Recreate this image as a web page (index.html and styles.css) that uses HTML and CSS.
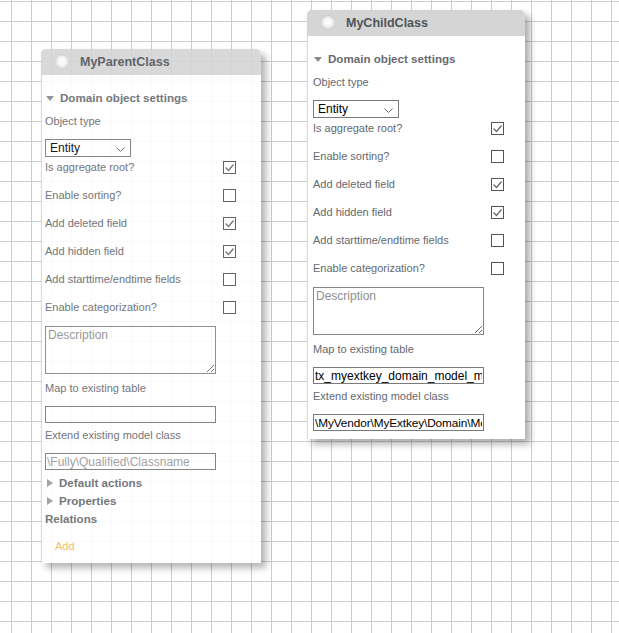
FILE: index.html
```html
<!DOCTYPE html>
<html>
<head>
<meta charset="utf-8">
<link rel="stylesheet" href="styles.css">
</head>
<body>
<div class="canvas">

  <div class="panel panel-parent">
    <div class="panel-head"><span class="knob"></span><span class="title">MyParentClass</span></div>
    <div class="panel-body">
      <div class="section"><span class="tri-down"></span>Domain object settings</div>
      <div class="label lbl-first">Object type</div>
      <div class="select">Entity<svg class="chev" width="9" height="5" viewBox="0 0 9 5"><path d="M0.5 0.5 L4.5 4.5 L8.5 0.5" fill="none" stroke="#666" stroke-width="1"/></svg></div>
      <div class="rows">
        <div class="row"><span>Is aggregate root?</span><span class="cb"><svg width="11" height="11" viewBox="0 0 11 11"><path d="M1.5 5.5 L4.5 8.5 L9.5 2.5" fill="none" stroke="#666" stroke-width="1.2"/></svg></span></div>
        <div class="row"><span>Enable sorting?</span><span class="cb"></span></div>
        <div class="row"><span>Add deleted field</span><span class="cb"><svg width="11" height="11" viewBox="0 0 11 11"><path d="M1.5 5.5 L4.5 8.5 L9.5 2.5" fill="none" stroke="#666" stroke-width="1.2"/></svg></span></div>
        <div class="row"><span>Add hidden field</span><span class="cb"><svg width="11" height="11" viewBox="0 0 11 11"><path d="M1.5 5.5 L4.5 8.5 L9.5 2.5" fill="none" stroke="#666" stroke-width="1.2"/></svg></span></div>
        <div class="row"><span>Add starttime/endtime fields</span><span class="cb"></span></div>
        <div class="row"><span>Enable categorization?</span><span class="cb"></span></div>
      </div>
      <textarea class="desc" placeholder="Description"></textarea>
      <div class="label lbl-map">Map to existing table</div>
      <input class="field" type="text" value="">
      <div class="label lbl-ext">Extend existing model class</div>
      <input class="field" type="text" placeholder="\Fully\Qualified\Classname">
      <div class="section sub sub-first"><span class="tri-right"></span>Default actions</div>
      <div class="section sub"><span class="tri-right"></span>Properties</div>
      <div class="section rel">Relations</div>
      <div class="add">Add</div>
    </div>
  </div>

  <div class="panel panel-child">
    <div class="panel-head"><span class="knob"></span><span class="title">MyChildClass</span></div>
    <div class="panel-body">
      <div class="section"><span class="tri-down"></span>Domain object settings</div>
      <div class="label lbl-first">Object type</div>
      <div class="select">Entity<svg class="chev" width="9" height="5" viewBox="0 0 9 5"><path d="M0.5 0.5 L4.5 4.5 L8.5 0.5" fill="none" stroke="#666" stroke-width="1"/></svg></div>
      <div class="rows">
        <div class="row"><span>Is aggregate root?</span><span class="cb"><svg width="11" height="11" viewBox="0 0 11 11"><path d="M1.5 5.5 L4.5 8.5 L9.5 2.5" fill="none" stroke="#666" stroke-width="1.2"/></svg></span></div>
        <div class="row"><span>Enable sorting?</span><span class="cb"></span></div>
        <div class="row"><span>Add deleted field</span><span class="cb"><svg width="11" height="11" viewBox="0 0 11 11"><path d="M1.5 5.5 L4.5 8.5 L9.5 2.5" fill="none" stroke="#666" stroke-width="1.2"/></svg></span></div>
        <div class="row"><span>Add hidden field</span><span class="cb"><svg width="11" height="11" viewBox="0 0 11 11"><path d="M1.5 5.5 L4.5 8.5 L9.5 2.5" fill="none" stroke="#666" stroke-width="1.2"/></svg></span></div>
        <div class="row"><span>Add starttime/endtime fields</span><span class="cb"></span></div>
        <div class="row"><span>Enable categorization?</span><span class="cb"></span></div>
      </div>
      <textarea class="desc" placeholder="Description"></textarea>
      <div class="label lbl-map">Map to existing table</div>
      <input class="field filled-a" type="text" value="tx_myextkey_domain_model_myparentclass">
      <div class="label lbl-ext">Extend existing model class</div>
      <input class="field filled-b" type="text" value="\MyVendor\MyExtkey\Domain\Model\MyParentClass">
    </div>
  </div>

</div>
</body>
</html>
```

FILE: styles.css
```css
html, body {
  margin: 0;
  padding: 0;
}

body {
  width: 619px;
  height: 633px;
  overflow: hidden;
  font-family: "Liberation Sans", Arial, sans-serif;
  background-color: #fff;
  background-image:
    linear-gradient(to right, #cdcdcd 1px, transparent 1px),
    linear-gradient(to bottom, #cdcdcd 1px, transparent 1px);
  background-size: 20px 20px;
  background-position: 11px 1px;
}

.canvas {
  position: relative;
  width: 619px;
  height: 633px;
}

.panel {
  position: absolute;
  background: #fff;
  border-radius: 5px 5px 0 0;
  box-shadow: 5px 5px 7px rgba(0, 0, 0, 0.32);
  border-left: 1px solid #d8d8d8;
  box-sizing: border-box;
}

.panel-parent {
  left: 41px;
  top: 49px;
  width: 220px;
  opacity: 0.9;
}

.panel-child {
  left: 307px;
  top: 10px;
  width: 218px;
}

.panel-child .panel-body {
  padding-left: 5px;
}

.panel-parent .row {
  padding-right: 22px;
}

.panel-child .row {
  padding-right: 18px;
}

.panel-head {
  height: 26px;
  background: #d5d5d5;
  border-radius: 5px 5px 0 0;
  display: flex;
  align-items: center;
  margin-left: -1px;
}

.knob {
  width: 14px;
  height: 14px;
  border-radius: 50%;
  margin-left: 14px;
  background: radial-gradient(circle at 50% 45%, #ffffff 0%, #f6f6f6 35%, #d6d6d6 70%, #b5b5b5 100%);
  box-shadow: 0 0 0 0.5px #c4c4c4;
}

.title {
  margin-left: 11px;
  font-weight: bold;
  font-size: 12.5px;
  color: #50555c;
}

.panel-body {
  padding: 0 3px 8px 3px;
  font-size: 11px;
  color: #65686e;
}

.section {
  height: 18px;
  line-height: 18px;
  margin-top: 14px;
  font-size: 11.6px;
  font-weight: bold;
  color: #686b71;
  display: flex;
  align-items: center;
}

.tri-down {
  width: 0;
  height: 0;
  border-left: 4px solid transparent;
  border-right: 4px solid transparent;
  border-top: 5px solid #8a8a8a;
  margin: 0 6px 0 1px;
}

.tri-right {
  width: 0;
  height: 0;
  border-top: 4.5px solid transparent;
  border-bottom: 4.5px solid transparent;
  border-left: 6px solid #9a9a9a;
  margin: 0 6px 0 2px;
}

.label {
  height: 18px;
  line-height: 18px;
}

.lbl-first { margin-top: 5px; }
.lbl-map { margin-top: 5px; }
.lbl-ext { margin-top: 3px; }

.select {
  margin-top: 9px;
  width: 86px;
  height: 18px;
  box-sizing: border-box;
  border: 1px solid #7a7a7a;
  font-size: 12px;
  line-height: 16px;
  color: #000;
  padding-left: 4px;
  position: relative;
}

.chev {
  position: absolute;
  right: 5px;
  top: 7px;
}

.rows {
  display: flex;
  flex-direction: column;
  gap: 8px;
}

.row {
  height: 20px;
  display: flex;
  align-items: center;
  justify-content: space-between;
}

.cb {
  width: 13px;
  height: 13px;
  box-sizing: border-box;
  border: 1px solid #555;
  background: #fff;
  display: flex;
  align-items: center;
  justify-content: center;
}

.cb svg {
  display: block;
}

.desc {
  display: block;
  margin: 9px 0 0 0;
  width: 171px;
  height: 48px;
  box-sizing: border-box;
  border: 1px solid #858585;
  padding: 1px 2px;
  font-family: "Liberation Sans", Arial, sans-serif;
  font-size: 12px;
  color: #000;
  resize: both;
  outline: none;
}

.desc::placeholder {
  color: #8e8e8e;
}

.field {
  display: block;
  margin: 9px 0 0 0;
  width: 171px;
  height: 17px;
  box-sizing: border-box;
  border: 1px solid #7a7a7a;
  padding: 0 1px;
  font-family: "Liberation Sans", Arial, sans-serif;
  font-size: 12px;
  color: #000;
  outline: none;
  background: #fff;
}

.field.filled-a {
  font-size: 12px;
}

.field.filled-b {
  font-size: 11.8px;
  letter-spacing: -0.1px;
}

.field::placeholder {
  color: #9a9a9a;
}

.sub {
  margin-top: 0;
}

.sub-first {
  margin-top: 4px;
}

.rel {
  margin-top: 0;
}

.add {
  margin-top: 9px;
  margin-left: 10px;
  height: 18px;
  line-height: 18px;
  color: #f5b84e;
  font-size: 11px;
}
```
